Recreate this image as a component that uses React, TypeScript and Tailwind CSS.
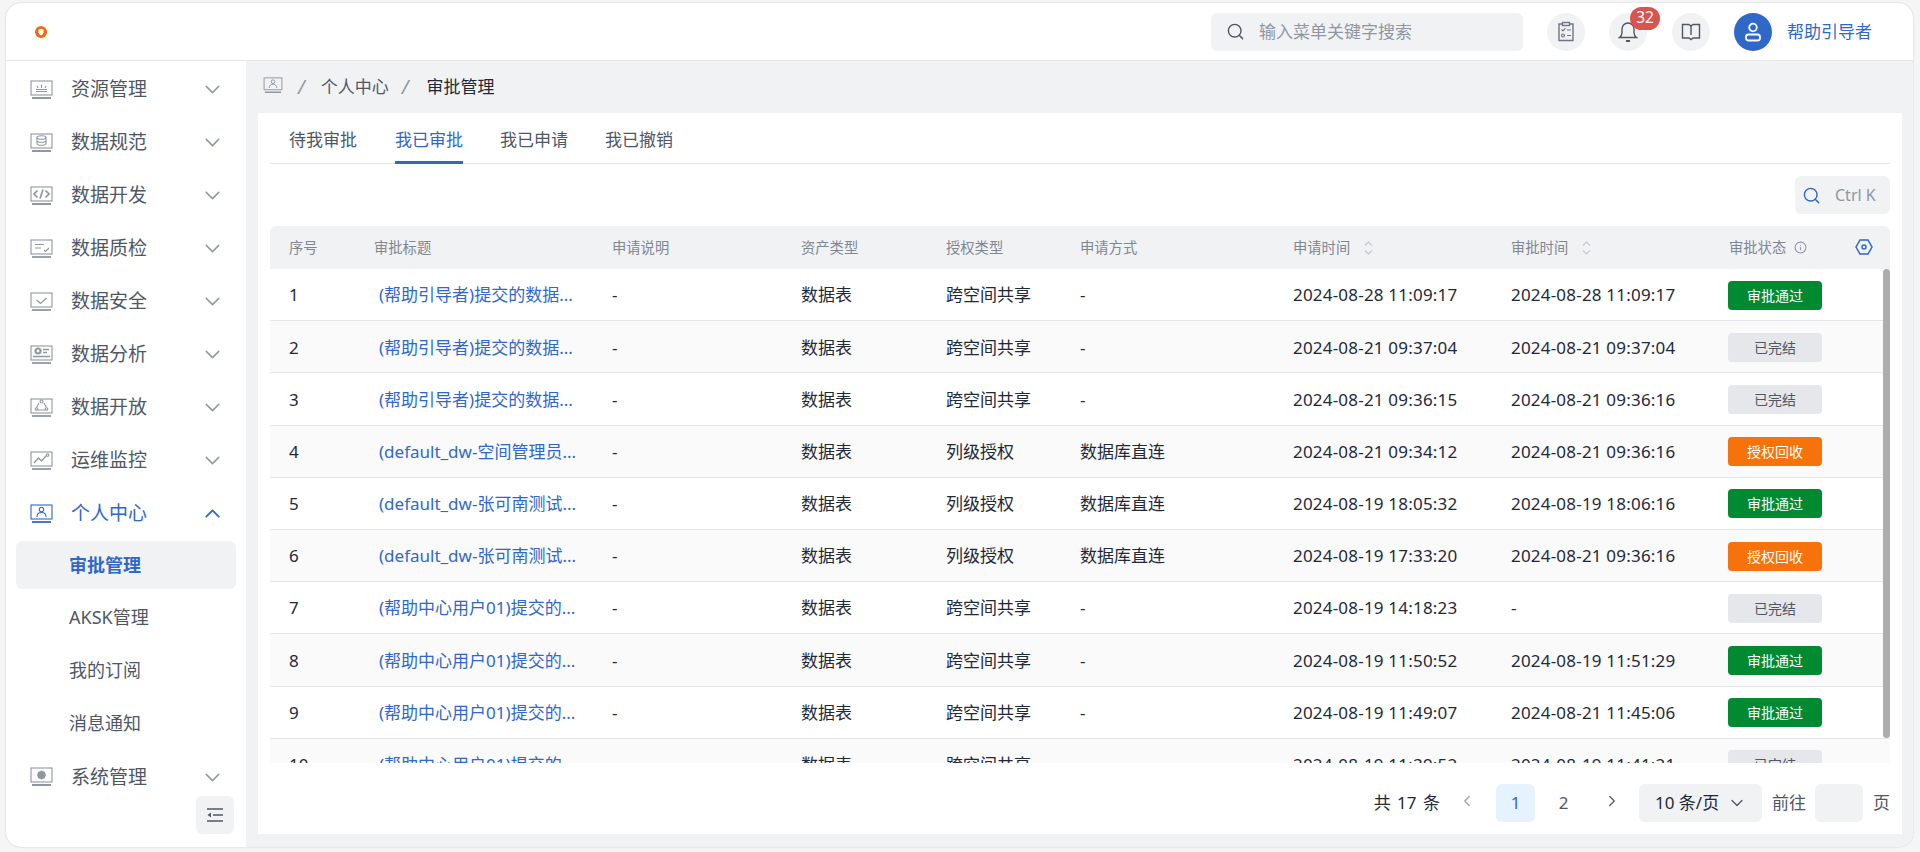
import React from "react";
import { ChevronDown, ChevronUp, ChevronLeft, ChevronRight, Search, Info } from "lucide-react";

const FONT = '"Noto Sans","Noto Sans CJK SC",sans-serif';

function Mon({ children, c = "#8f96a3" }: { children?: React.ReactNode; c?: string }) {
  return (
    <svg width="23" height="20" viewBox="0 0 23 20" fill="none" stroke={c} strokeWidth="1.1" className="shrink-0">
      <rect x="1" y="1" width="21" height="14" />
      <path d="M2 18h19" strokeWidth="1.8" />
      {children}
    </svg>
  );
}

const icons: Record<string, React.ReactNode> = {
  res: <path d="M6 11.500h11M6 9.500h11M8 8 7 6M11.500 8V4.500M15 8l1-2" />,
  std: <><ellipse cx="11.500" cy="4.500" rx="4.500" ry="1.800" /><path d="M7 4.500v6c0 1 2 1.800 4.500 1.800S16 11.500 16 10.500v-6M7 7.500c0 1 2 1.800 4.500 1.800S16 8.500 16 7.500" /></>,
  dev: <path d="M7.500 4.500 4 8l3.500 3.500M15.500 4.500 19 8l-3.500 3.500M13 3.500l-3 9" strokeWidth="1.700" />,
  qa: <path d="M5 5.500h9M5 9h6M14 11l1.500 1.500L19 9" />,
  sec: <path d="M6.500 8l4 3.500 6-5.500" strokeWidth="1.300" />,
  ana: <><circle cx="8" cy="6" r="2.500" strokeWidth="2.200" /><path d="M13 4.500h6M13 7.500h4M3 11.500h17" strokeWidth="1.600" /></>,
  open: <><circle cx="11.500" cy="3.500" r="1.500" /><circle cx="6.500" cy="11" r="1.300" /><circle cx="16.500" cy="11" r="1.300" /><path d="M9 5 6.500 9.500M14 5l2.500 4.500M8 12h7" /></>,
  ops: <><path d="M4 12l4.500-5 3 3 4.500-5" strokeWidth="1.300" /><circle cx="17.500" cy="4" r="1.300" /></>,
  me: <><circle cx="11.500" cy="5.500" r="2.200" /><path d="M7 13c0-3 2-4.500 4.500-4.500S16 10 16 13" /></>,
  sys: <><circle cx="11.500" cy="8" r="2.800" strokeWidth="2.600" /><path d="M11.500 3.500v9M7 8h9M8.300 4.800l6.400 6.400M14.700 4.800l-6.400 6.400" strokeWidth="1.200" /></>,
};

function Item({ icon, label, open }: { icon: string; label: string; open?: boolean }) {
  const c = open ? "#2f68c8" : "#8f96a3";
  return (
    <div className={`h-[53px] flex items-center pl-[24px] pr-[21px] text-[19px] ${open ? "text-[#2f68c8]" : "text-[#4f5765]"}`}>
      <Mon c={c}>{icons[icon]}</Mon>
      <span className="ml-[18px] flex-1">{label}</span>
      {open ? <ChevronUp size={25} color={c} strokeWidth={1.700} /> : <ChevronDown size={25} color={c} strokeWidth={1.400} />}
    </div>
  );
}

function Sub({ label, active }: { label: string; active?: boolean }) {
  return (
    <div className="h-[52.700px] pt-[1px] px-[10px]">
      <div className={`h-[48px] flex items-center pl-[53px] rounded-md text-[18px] ${active ? "bg-[#f1f2f4] text-[#2f68c8] font-bold" : "text-[#4f5765]"}`}>
        {label}
      </div>
    </div>
  );
}

function Sort() {
  return (
    <svg width="9" height="16" viewBox="0 0 9 16" fill="none" stroke="#c4c8cf" strokeWidth="1.200" className="ml-[14px]">
      <path d="M1 5.500 4.500 2 8 5.500M1 10.500 4.500 14 8 10.500" />
    </svg>
  );
}

const COLS = "grid grid-cols-[85px_238px_189px_145px_134px_213px_218px_218px_180px]";

const T1 = "(帮助引导者)提交的数据...";
const T2 = "(default_dw-空间管理员...";
const T3 = "(default_dw-张可南测试...";
const T4 = "(帮助中心用户01)提交的...";
const SHARE = "跨空间共享";
const COL = "列级授权";
const DB = "数据库直连";
const OK = "审批通过";
const DONE = "已完结";
const BACK = "授权回收";

const rows: [string, string, string, string, string, string][] = [
  [T1, SHARE, "-", "2024-08-28 11:09:17", "2024-08-28 11:09:17", OK],
  [T1, SHARE, "-", "2024-08-21 09:37:04", "2024-08-21 09:37:04", DONE],
  [T1, SHARE, "-", "2024-08-21 09:36:15", "2024-08-21 09:36:16", DONE],
  [T2, COL, DB, "2024-08-21 09:34:12", "2024-08-21 09:36:16", BACK],
  [T3, COL, DB, "2024-08-19 18:05:32", "2024-08-19 18:06:16", OK],
  [T3, COL, DB, "2024-08-19 17:33:20", "2024-08-21 09:36:16", BACK],
  [T4, SHARE, "-", "2024-08-19 14:18:23", "-", DONE],
  [T4, SHARE, "-", "2024-08-19 11:50:52", "2024-08-19 11:51:29", OK],
  [T4, SHARE, "-", "2024-08-19 11:49:07", "2024-08-21 11:45:06", OK],
  [T4, SHARE, "-", "2024-08-19 11:39:52", "2024-08-19 11:41:21", DONE],
];

function Status({ s }: { s: string }) {
  const cls = s === OK ? "bg-[#028a32] text-white" : s === BACK ? "bg-[#f5730a] text-white" : "bg-[#e5e7ea] text-[#4f5765]";
  return <span className={`-ml-[1px] w-[94px] h-[29px] rounded flex items-center justify-center text-[14px] ${cls}`}>{s}</span>;
}

function Head({ children }: { children: React.ReactNode }) {
  return <div className="pl-[19px] flex items-center">{children}</div>;
}

function Round({ children }: { children: React.ReactNode }) {
  return <div className="w-[38px] h-[38px] rounded-full bg-[#f1f2f4] flex items-center justify-center relative">{children}</div>;
}

export default function App() {
  return (
    <div className="h-[852px] w-[1920px] overflow-hidden bg-[#f5f5f5] pl-[6px] pr-[7px] pt-[3px] pb-[5px]" style={{ fontFamily: FONT }}>
      <div className="h-full bg-white rounded-[15px] overflow-hidden flex flex-col shadow-[0_0_2px_rgba(0,0,0,0.2)]">
        <header className="h-[58px] shrink-0 border-b border-[#e4e6ea] flex items-center pr-[41px]">
          <svg width="14" height="14" viewBox="0 0 14 14" className="ml-[28px]">
            <circle cx="7" cy="7" r="6" fill="#f5650a" />
            <path d="M4.400 4.600 7 3.800l2.600.8v2.600C9.600 8.800 8 10 7 10.400 6 10 4.400 8.800 4.400 7.200Z" fill="#fff" />
          </svg>
          <div className="flex-1" />
          <div className="w-[312px] h-[38px] rounded-md bg-[#f1f2f4] flex items-center pl-[15px] text-[17px] text-[#8f96a3]">
            <Search size={19} color="#4f5765" strokeWidth={1.800} />
            <span className="ml-[14px]">输入菜单关键字搜索</span>
          </div>
          <div className="ml-[24px]">
            <Round>
              <svg width="18" height="21" viewBox="0 0 18 21" fill="none" stroke="#6f7683" strokeWidth="1.400">
                <path d="M5.500 3H2v16.500h14V3h-3.500" />
                <rect x="5.500" y="1.500" width="7" height="3" />
                <path d="M4.500 8.500l1.500 1.500 2.500-2.800M10 9h4M10 14.500h4" strokeWidth="1.200" />
                <circle cx="6" cy="14.500" r="1.500" strokeWidth="1.200" />
              </svg>
            </Round>
          </div>
          <div className="ml-[24px]">
            <Round>
              <svg width="20" height="22" viewBox="0 0 20 22" fill="none" stroke="#4f5765" strokeWidth="1.400">
                <path d="M1.500 16.500c1.500-1 2.500-2.500 2.500-5V8a6 6 0 0 1 12 0v3.500c0 2.500 1 4 2.500 5Z" />
                <path d="M8 20h4" strokeWidth="1.800" />
              </svg>
              <span className="absolute left-[21px] top-[-6px] w-[30px] h-[23px] rounded-full bg-[#d9534f] text-white text-[15.500px] flex items-center justify-center">32</span>
            </Round>
          </div>
          <div className="ml-[25px]">
            <Round>
              <svg width="20" height="18" viewBox="0 0 20 18" fill="none" stroke="#4f5765" strokeWidth="1.400">
                <path d="M1.500 1.500H8l2 1.500 2-1.500h6.500v13.500H12L10 16.500 8 15H1.500Z" />
                <path d="M10 3v9" />
              </svg>
            </Round>
          </div>
          <div className="ml-[24px] w-[38px] h-[38px] rounded-full bg-[#2f68c8] flex items-center justify-center">
            <svg width="20" height="22" viewBox="0 0 20 22" fill="none" stroke="#fff" strokeWidth="1.800">
              <circle cx="10" cy="6.500" r="3.800" />
              <rect x="3" y="13.500" width="14" height="6" rx="2.500" />
            </svg>
          </div>
          <span className="ml-[15px] text-[17px] text-[#2f68c8]">帮助引导者</span>
        </header>

        <div className="flex-1 min-h-0 flex">
          <aside className="w-[240px] shrink-0 relative overflow-hidden pt-[2px]">
            <Item icon="res" label="资源管理" />
            <Item icon="std" label="数据规范" />
            <Item icon="dev" label="数据开发" />
            <Item icon="qa" label="数据质检" />
            <Item icon="sec" label="数据安全" />
            <Item icon="ana" label="数据分析" />
            <Item icon="open" label="数据开放" />
            <Item icon="ops" label="运维监控" />
            <Item icon="me" label="个人中心" open />
            <Sub label="审批管理" active />
            <Sub label="AKSK管理" />
            <Sub label="我的订阅" />
            <Sub label="消息通知" />
            <Item icon="sys" label="系统管理" />
            <div className="absolute left-[190px] top-[735px] w-[38px] h-[38px] rounded-md bg-[#f1f2f4] flex items-center justify-center">
              <svg width="18" height="14" viewBox="0 0 18 14" fill="none" stroke="#4f5765" strokeWidth="1.600">
                <path d="M1 1h16M7 7h10M1 13h16" />
                <path d="M5 4.500v5L1.500 7Z" fill="#4f5765" stroke="none" />
              </svg>
            </div>
          </aside>

          <main className="flex-1 min-w-0 bg-[#f1f2f4] pl-[12px] pr-[11px] pb-[13px] flex flex-col">
            <div className="h-[52px] shrink-0 flex items-center pl-[5px] text-[17px] text-[#4f5765]">
              <svg width="20" height="17" viewBox="0 0 23 20" fill="none" stroke="#8f96a3" strokeWidth="1.100" className="mb-[4px]">
                <rect x="1" y="1" width="21" height="14" />
                <path d="M2 18h19" strokeWidth="1.800" />
                {icons.me}
              </svg>
              <span className="ml-[15px] mr-[16px] text-[#8f96a3] italic text-[19px]">/</span>
              <span>个人中心</span>
              <span className="ml-[13px] mr-[18px] text-[#8f96a3] italic text-[19px]">/</span>
              <span className="text-[#1f2937]">审批管理</span>
            </div>

            <section className="flex-1 min-h-0 bg-white px-[12px] flex flex-col">
              <div className="h-[51px] shrink-0 border-b border-[#e4e6ea] flex text-[17px] text-[#4f5765]">
                <div className="pl-[19px] pr-[38px] flex items-center pt-[4px]">待我审批</div>
                <div className="relative pr-[37px] flex items-center pt-[4px] text-[#2f68c8]">
                  我已审批
                  <span className="absolute left-0 right-[37px] bottom-[-1px] h-[3px] bg-[#2f68c8]" />
                </div>
                <div className="pr-[37px] flex items-center pt-[4px]">我已申请</div>
                <div className="flex items-center pt-[4px]">我已撤销</div>
              </div>

              <div className="h-[62px] shrink-0 flex justify-end items-start pt-[12px]">
                <div className="w-[95px] h-[38px] rounded-md bg-[#f1f2f4] flex items-center pl-[7px] text-[16px] text-[#8f96a3]">
                  <Search size={19} color="#2f68c8" strokeWidth={1.800} />
                  <span className="ml-[14px]">Ctrl K</span>
                </div>
              </div>

              <div className={`${COLS} h-[43px] shrink-0 bg-[#f1f2f4] rounded-t-md text-[14.300px] text-[#7f8793]`}>
                <Head>序号</Head>
                <Head>审批标题</Head>
                <Head>申请说明</Head>
                <Head>资产类型</Head>
                <Head>授权类型</Head>
                <Head>申请方式</Head>
                <Head>申请时间<Sort /></Head>
                <Head>审批时间<Sort /></Head>
                <div className="flex items-center justify-between pl-[19px]">
                  <span className="flex items-center">审批状态<Info size={13} color="#8f96a3" className="ml-[8px]" /></span>
                  <svg width="18" height="18" viewBox="0 0 18 18" fill="none" stroke="#2f68c8" strokeWidth="1.500" className="mr-[17px] mb-[2px]">
                    <path d="M5 2h8l4 7-4 7H5L1 9Z" />
                    <circle cx="9" cy="9" r="2" />
                  </svg>
                </div>
              </div>

              <div className="relative h-[494px] shrink-0 overflow-hidden">
                {rows.map((r, i) => (
                  <div key={i} className={`${COLS} h-[52.200px] pt-[1px] border-b border-[#e4e6ea] text-[17px] text-[#1f2937] ${i % 2 ? "bg-[#fafafa]" : "bg-white"}`}>
                    <Head><span>{i + 1}</span></Head>
                    <Head><span className="pl-[5px] text-[#2f68c8] whitespace-nowrap">{r[0]}</span></Head>
                    <Head>-</Head>
                    <Head>数据表</Head>
                    <Head>{r[1]}</Head>
                    <Head>{r[2]}</Head>
                    <Head><span className="tracking-[0.2px]">{r[3]}</span></Head>
                    <Head><span className="tracking-[0.2px]">{r[4]}</span></Head>
                    <Head><Status s={r[5]} /></Head>
                  </div>
                ))}
                <div className="absolute right-0 top-0 w-[7px] h-[469px] rounded bg-[#adadad]" />
              </div>

              <div className="flex-1 flex items-start justify-end pt-[21px] text-[17px] text-[#4f5765]">
                <span className="h-[38px] flex items-center text-[#1f2937] [word-spacing:2px]">共 17 条</span>
                <ChevronLeft size={18} color="#9aa1ad" className="ml-[18px] mt-[8px]" strokeWidth={1.600} />
                <span className="ml-[20px] w-[39px] h-[38px] rounded-md bg-[#e6f2fd] text-[#2f68c8] flex items-center justify-center">1</span>
                <span className="w-[39px] ml-[9px] h-[38px] flex items-center justify-center">2</span>
                <ChevronRight size={18} color="#4f5765" className="ml-[20px] mt-[8px]" strokeWidth={1.600} />
                <div className="ml-[18px] w-[123px] h-[38px] rounded-md bg-[#f1f2f4] flex items-center pl-[16px] text-[#1f2937]">
                  10 条/页
                  <ChevronDown size={20} color="#4f5765" className="ml-[8px]" strokeWidth={1.600} />
                </div>
                <span className="ml-[10px] h-[38px] flex items-center">前往</span>
                <span className="ml-[9px] w-[48px] h-[38px] rounded-md bg-[#f1f2f4]" />
                <span className="ml-[10px] h-[38px] flex items-center">页</span>
              </div>
            </section>
          </main>
        </div>
      </div>
    </div>
  );
}
